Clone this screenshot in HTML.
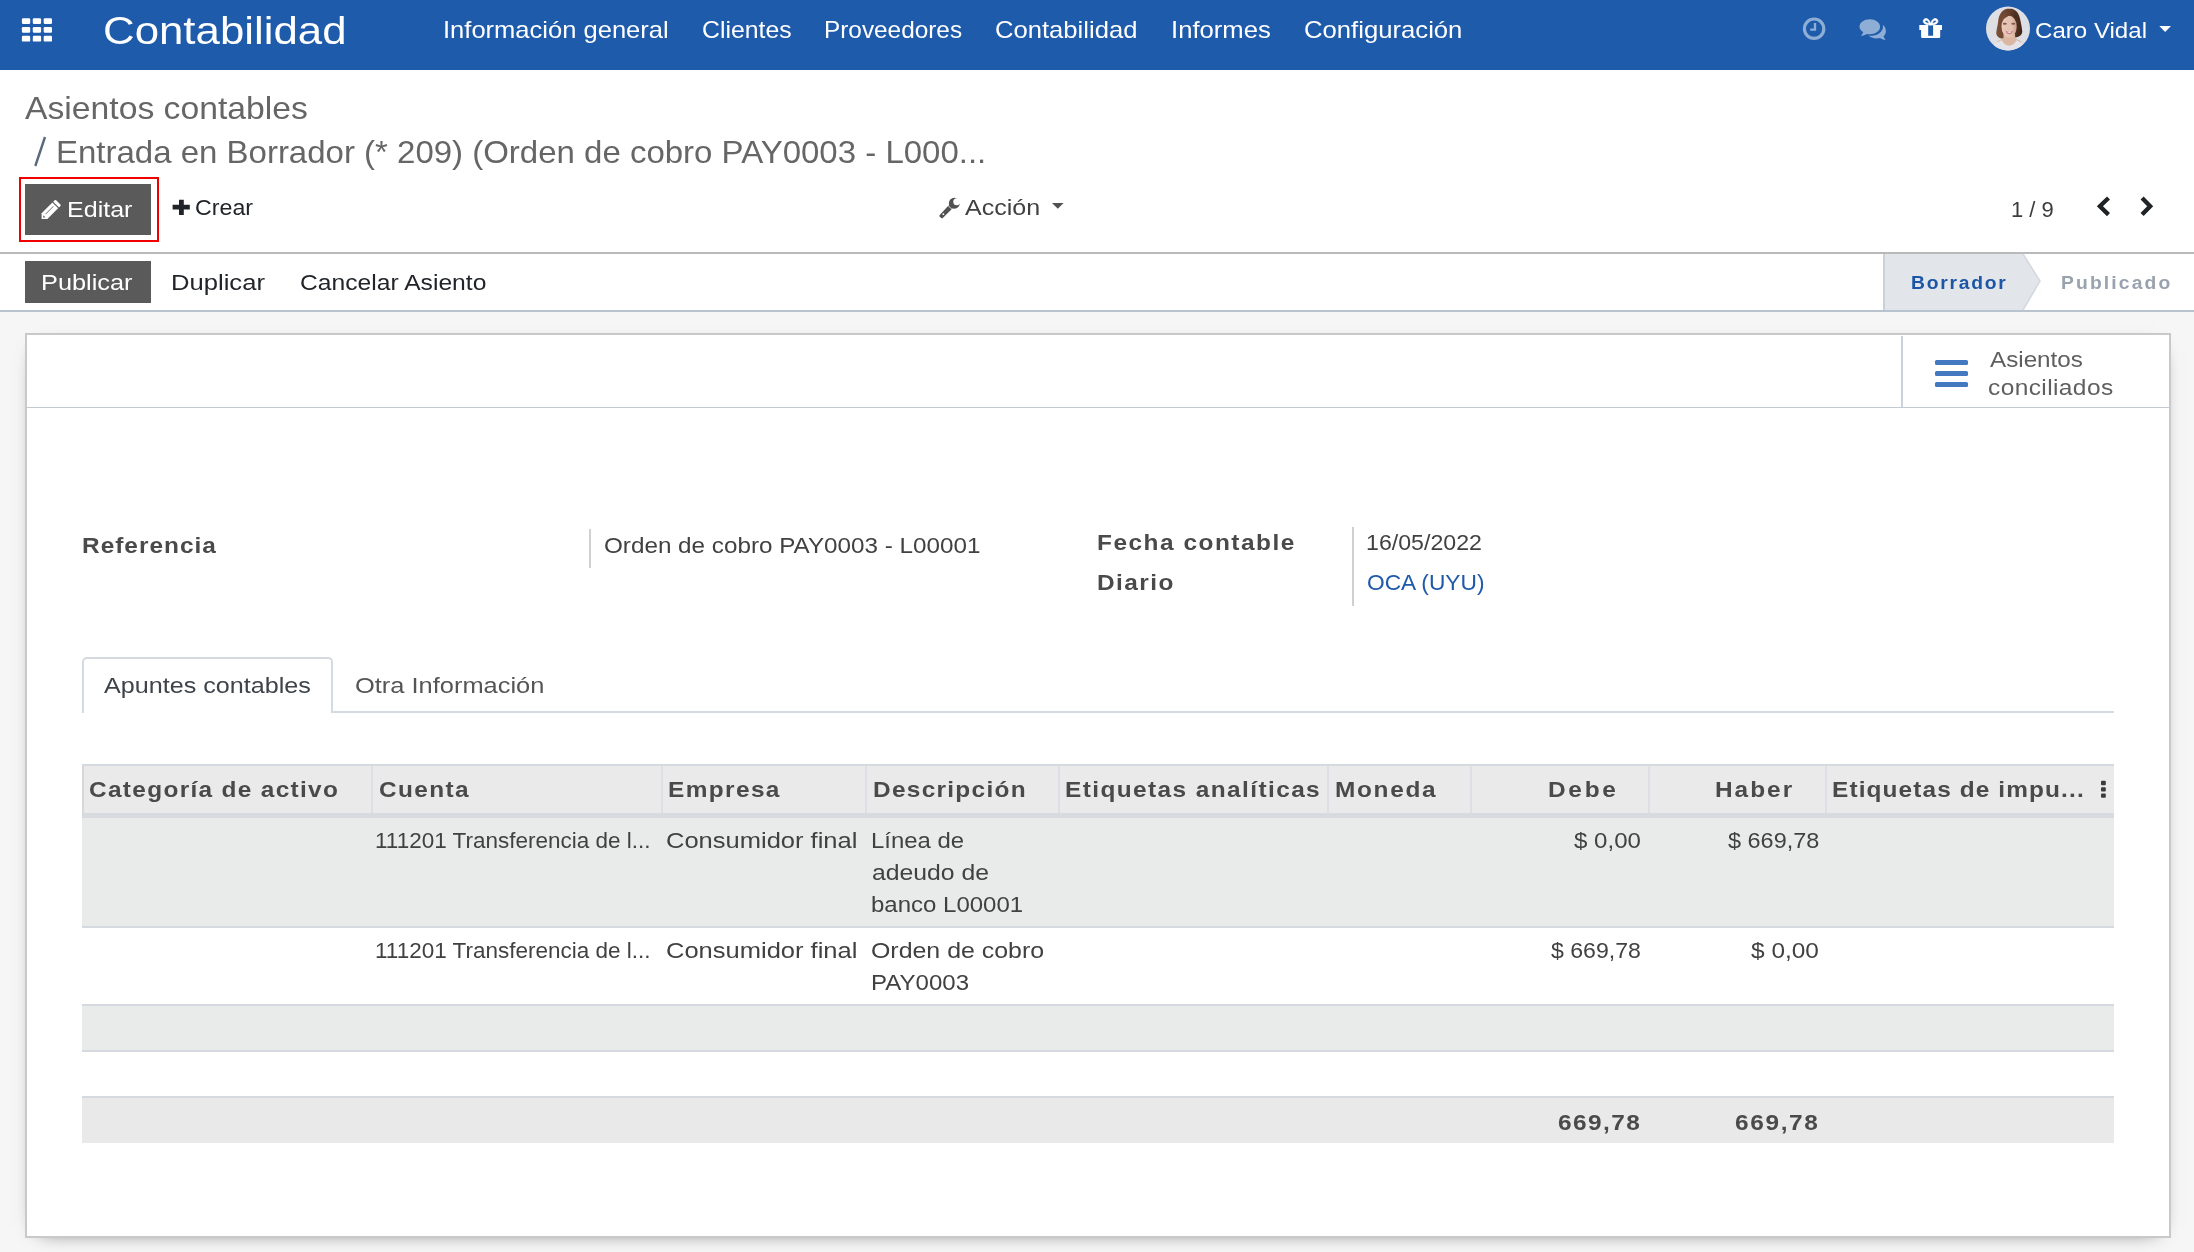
<!DOCTYPE html>
<html lang="es">
<head>
<meta charset="utf-8">
<title>Odoo - Asientos contables</title>
<style>
html,body{margin:0;padding:0}
body{width:2194px;height:1252px;overflow:hidden;position:relative;background:#f6f6f6;font-family:"Liberation Sans",sans-serif}
.a{position:absolute;box-sizing:border-box}
.t{position:absolute;white-space:nowrap;line-height:1;transform-origin:0 0;font-family:"Liberation Sans",sans-serif}
svg{position:absolute;overflow:visible}
</style>
</head>
<body>
<!-- navbar -->
<div class="a" style="left:0;top:0;width:2194px;height:70px;background:#1f5bab"></div>
<!-- control panel -->
<div class="a" style="left:0;top:70px;width:2194px;height:184px;background:#fff;border-bottom:2px solid #b9b9b9"></div>
<!-- statusbar -->
<div class="a" style="left:0;top:254px;width:2194px;height:58px;background:#fff;border-bottom:2px solid #b9c3cf"></div>
<!-- sheet -->
<div class="a" style="left:25px;top:333px;width:2146px;height:905px;background:#fff;border:2px solid #c9c9ca;box-shadow:0 5px 20px -15px #000"></div>
<!-- button box -->
<div class="a" style="left:27px;top:407px;width:2142px;height:1px;background:#c3cad3"></div>
<div class="a" style="left:1901px;top:336px;width:2px;height:71px;background:#cbd1d9"></div>
<div class="a" style="left:1935px;top:360px;width:33px;height:5px;border-radius:1.5px;background:#4479bf"></div>
<div class="a" style="left:1935px;top:371px;width:33px;height:5px;border-radius:1.5px;background:#4479bf"></div>
<div class="a" style="left:1935px;top:382px;width:33px;height:5px;border-radius:1.5px;background:#4479bf"></div>
<!-- edit button -->
<div class="a" style="left:19px;top:177px;width:140px;height:65px;border:2px solid #f20000"></div>
<div class="a" style="left:25px;top:184px;width:126px;height:51px;background:#5a5a5a"></div>
<!-- publicar button -->
<div class="a" style="left:25px;top:261px;width:126px;height:42px;background:#5a5a5a"></div>
<!-- status arrow -->
<svg style="left:1883px;top:254px" width="160" height="56" viewBox="0 0 160 56"><path d="M0 0H140L157 27L140 56H0Z" fill="#e2e5ea"/><path d="M1 0V56" stroke="#cbd1d9" stroke-width="2" fill="none"/><path d="M140 0L157 27L140 56" stroke="#d3d8de" stroke-width="1.5" fill="none"/></svg>
<!-- form separators -->
<div class="a" style="left:589px;top:529px;width:2px;height:39px;background:#d0d0d0"></div>
<div class="a" style="left:1352px;top:527px;width:2px;height:79px;background:#d0d0d0"></div>
<!-- tabs -->
<div class="a" style="left:82px;top:711px;width:2032px;height:2px;background:#d5dae0"></div>
<div class="a" style="left:82px;top:657px;width:251px;height:56px;background:#fff;border:2px solid #d5dae0;border-bottom:none;border-radius:5px 5px 0 0"></div>
<!-- table -->
<div class="a" style="left:82px;top:764px;width:2032px;height:54px;background:#eaeaea;border-top:2px solid #d5dae0;border-bottom:5px solid #d7dbe0;border-left:2px solid #d8d8da"></div>
<div class="a" style="left:371px;top:766px;width:2px;height:47px;background:#dcdfe3"></div>
<div class="a" style="left:661px;top:766px;width:2px;height:47px;background:#dcdfe3"></div>
<div class="a" style="left:865px;top:766px;width:2px;height:47px;background:#dcdfe3"></div>
<div class="a" style="left:1058px;top:766px;width:2px;height:47px;background:#dcdfe3"></div>
<div class="a" style="left:1327px;top:766px;width:2px;height:47px;background:#dcdfe3"></div>
<div class="a" style="left:1470px;top:766px;width:2px;height:47px;background:#dcdfe3"></div>
<div class="a" style="left:1648px;top:766px;width:2px;height:47px;background:#dcdfe3"></div>
<div class="a" style="left:1825px;top:766px;width:2px;height:47px;background:#dcdfe3"></div>
<div class="a" style="left:82px;top:818px;width:2032px;height:110px;background:#e9eaea;border-bottom:2px solid #d5dae0"></div>
<div class="a" style="left:82px;top:928px;width:2032px;height:78px;background:#fff;border-bottom:2px solid #d5dae0"></div>
<div class="a" style="left:82px;top:1006px;width:2032px;height:46px;background:#e9eaea;border-bottom:2px solid #d5dae0"></div>
<div class="a" style="left:82px;top:1052px;width:2032px;height:46px;background:#fff;border-bottom:2px solid #d5dae0"></div>
<div class="a" style="left:82px;top:1098px;width:2032px;height:45px;background:#e9e9e9"></div>
<svg style="left:0;top:0" width="2194" height="1252" viewBox="0 0 2194 1252">
<!-- apps grid -->
<g fill="#fff">
<rect x="21.9" y="18.2" width="8.3" height="5.8" rx="1.2"/><rect x="32.8" y="18.2" width="8.3" height="5.8" rx="1.2"/><rect x="43.7" y="18.2" width="8.3" height="5.8" rx="1.2"/>
<rect x="21.9" y="27" width="8.3" height="5.8" rx="1.2"/><rect x="32.8" y="27" width="8.3" height="5.8" rx="1.2"/><rect x="43.7" y="27" width="8.3" height="5.8" rx="1.2"/>
<rect x="21.9" y="35.8" width="8.3" height="5.8" rx="1.2"/><rect x="32.8" y="35.8" width="8.3" height="5.8" rx="1.2"/><rect x="43.7" y="35.8" width="8.3" height="5.8" rx="1.2"/>
</g>
<!-- clock -->
<g fill="none" stroke="#8faed6">
<circle cx="1814.1" cy="28.7" r="9.7" stroke-width="3.2"/>
<path d="M1815 23V29.6H1810.2" stroke-width="2.3"/>
</g>
<!-- chat -->
<g fill="#8faed6">
<path d="M1885.9 31.2c0 1.9-.9 3.6-2.4 5 .3 1.3 1 2.500 2.100 3.500-2.200 0-4-.7-5.400-1.800-1.200.3-2.400.5-3.700.5-3.300 0-6.200-1.100-8-2.900 1 .1 1.900.2 2.900.2 6.400 0 11.600-4 11.600-8.900 0-.7-.1-1.300-.3-2 2 1.500 3.200 3.800 3.200 6.400z"/>
<path d="M1869.8 19.300c5.700 0 10.300 3.400 10.300 7.500s-4.600 7.500-10.300 7.500c-1.100 0-2.200-.1-3.200-.4-1.500 1.100-3.400 1.800-5.600 1.800 1.100-1 1.900-2.300 2.200-3.600-2.300-1.400-3.700-3.300-3.700-5.300 0-4.100 4.600-7.500 10.300-7.500z"/>
</g>
<!-- gift -->
<g fill="#fff">
<path d="M1919.300 24.900h8.900v10.900h4.900v-10.900h8.900v5h-1.800v6.800q0 1.200-1.200 1.200h-16.700q-1.200 0-1.200-1.200v-6.800h-1.800z"/>
<path d="M1930.600 25.200c-1.800-.2-6.700-.6-7.300-3.400-.4-2 1.300-3.500 3.200-3.300 2 .3 3.400 3 4.100 5 .7-2 2.100-4.700 4.100-5 1.900-.2 3.600 1.300 3.200 3.300-.6 2.800-5.500 3.200-7.300 3.400zm-1.400-1.700c-.5-1.400-1.500-3.200-2.800-3.300-.9-.1-1.600.5-1.400 1.400.3 1.200 2.600 1.700 4.200 1.900zm2.800 0c1.600-.2 3.900-.7 4.200-1.900.2-.9-.5-1.500-1.400-1.400-1.300.1-2.300 1.900-2.800 3.300z" fill-rule="evenodd" stroke="#fff" stroke-width="0.700" stroke-linejoin="round"/>
</g>
<!-- avatar -->
<defs><clipPath id="av"><circle cx="2008" cy="28.500" r="22"/></clipPath>
<filter id="bl" x="-10%" y="-10%" width="120%" height="120%"><feGaussianBlur stdDeviation="0.550"/></filter>
<linearGradient id="hg" x1="0" y1="0" x2="1" y2="0"><stop offset="0" stop-color="#7d5139"/><stop offset="0.500" stop-color="#63402c"/><stop offset="1" stop-color="#3f2418"/></linearGradient>
<linearGradient id="sg" x1="0" y1="0" x2="1" y2="0"><stop offset="0" stop-color="#e9c9b9"/><stop offset="0.700" stop-color="#e2bfad"/><stop offset="1" stop-color="#c99f8b"/></linearGradient></defs>
<g clip-path="url(#av)">
<rect x="1984" y="4" width="48" height="49" fill="#dedfe4"/>
<g filter="url(#bl)">
<path d="M2009.500 8.600c-7.300 0-10.600 6-11.300 12.500-.600 5.500-1.800 8.500-2 12.500.600 3.200 2.800 4.700 5.200 5h6l8.500-1.200c3.300-.300 5.800-2 6.400-5.300-.400-5-1.200-7.500-2-12-1.100-6.500-4.300-11.500-10.800-11.500z" fill="url(#hg)"/>
<path d="M2003.600 34h11.400l.300 4.300 6.200 3.200v10h-24.500v-10l6.400-3.200z" fill="#dbb7a3"/>
<ellipse cx="2009.100" cy="26.800" rx="7.600" ry="11" fill="url(#sg)"/>
<path d="M2001.600 20c1.200-5.500 4.800-8.600 8.200-8.600 3.800 0 6.800 3.400 7.800 8.800-2.600-2.600-4.800-4.800-7.200-6-2.200 2-5.600 4.200-8.800 5.800z" fill="url(#hg)"/>
<ellipse cx="2004.800" cy="23.700" rx="2" ry="1" fill="#7b5a4f"/><ellipse cx="2013.300" cy="23.700" rx="2" ry="1" fill="#7b5a4f"/>
<path d="M2005.500 30.800c2.300.800 5.300.800 7.600 0-.700 2.500-2.200 3.500-3.800 3.500s-3.200-1-3.800-3.500z" fill="#cd7f88"/>
<path d="M2007.200 31.500h4.300c-.400 1-1.200 1.400-2.200 1.400s-1.800-.400-2.100-1.400z" fill="#f3e6e6"/>
<path d="M1992 47.500c2-4 5.800-5.600 9.800-7.200 1.500 3.600 4.200 5.400 7.400 5.400s5.700-1.800 7.200-5.400c4 1.500 7.300 3.400 9 7.200v6h-33.400z" fill="#e3e3e9"/>
</g>
</g>
<!-- user caret -->
<path d="M2159.300 26h11.700l-5.850 6z" fill="#fff"/>
<!-- pencil -->
<g fill="#fff">
<path d="M41.600 213.300L52.350 202.550L58.150 208.350L47.400 219.100H41.600Z"/>
<path d="M53.200 201.700L54.600 200.300Q55.400 199.500 56.200 200.300L60.400 204.500Q61.200 205.300 60.400 206.100L59 207.500Z"/>
</g>
<path d="M45.600 214.100L53.300 206.400" stroke="#5a5a5a" stroke-width="0.900" fill="none"/>
<path d="M43.200 215.200v2.300h2.300z" fill="#5a5a5a"/>
<!-- breadcrumb slash -->
<path d="M35.300 166L45 137" stroke="#596a7d" stroke-width="2.400" fill="none"/>
<!-- plus -->
<path d="M179 199.800h4.800v4.900h6v4.800h-6v5.500h-4.800v-5.500h-6.400v-4.800h6.400z" fill="#212529"/>
<!-- wrench -->
<g>
<path d="M939.700 215L951.300 202.600L954.900 206.100L942.800 218Q942 218.700 941.200 218L939.600 216.400Q939.100 215.700 939.700 215Z" fill="#515151"/>
<circle cx="954.400" cy="203.200" r="5.500" fill="#515151"/>
<circle cx="956.800" cy="201.800" r="3.500" fill="#fff"/>
<path d="M947.800 205.300L952.400 209.700" stroke="#fff" stroke-width="0.800" fill="none"/>
<circle cx="943.400" cy="214.200" r="0.900" fill="#fff"/>
</g>
<!-- action caret -->
<path d="M1052 203h11.600l-5.800 5.800z" fill="#515151"/>
<!-- pager chevrons -->
<g fill="none" stroke="#1f2326" stroke-width="4.300">
<path d="M2108.500 198L2099.900 206.300L2108.500 214.600"/>
<path d="M2142.100 198L2150.200 206.300L2142.100 214.600"/>
</g>
<!-- kebab -->
<g fill="#3c3c3c">
<rect x="2101" y="780.800" width="4.800" height="4.400" rx="1"/><rect x="2101" y="787.200" width="4.800" height="4.400" rx="1"/><rect x="2101" y="793.400" width="4.800" height="4.400" rx="1"/>
</g>
</svg>

<div class="a" style="left:0;top:0;width:2194px;height:1252px;will-change:transform">
<nav>
<span class="t" style="left:103.38px;top:11px;font-size:39px;font-weight:400;color:#ffffff;letter-spacing:0.000px;transform:scaleX(1.1234)">Contabilidad</span>
<span class="t" style="left:443.32px;top:19px;font-size:23.4px;font-weight:400;color:#ffffff;letter-spacing:0.000px;transform:scaleX(1.0917)">Información general</span>
<span class="t" style="left:702.14px;top:19px;font-size:23.4px;font-weight:400;color:#ffffff;letter-spacing:0.000px;transform:scaleX(1.0603)">Clientes</span>
<span class="t" style="left:824.16px;top:19px;font-size:23.4px;font-weight:400;color:#ffffff;letter-spacing:0.000px;transform:scaleX(1.0410)">Proveedores</span>
<span class="t" style="left:995.30px;top:19px;font-size:23.4px;font-weight:400;color:#ffffff;letter-spacing:0.000px;transform:scaleX(1.0950)">Contabilidad</span>
<span class="t" style="left:1170.81px;top:19px;font-size:23.4px;font-weight:400;color:#ffffff;letter-spacing:0.000px;transform:scaleX(1.0974)">Informes</span>
<span class="t" style="left:1303.60px;top:19px;font-size:23.4px;font-weight:400;color:#ffffff;letter-spacing:0.000px;transform:scaleX(1.0975)">Configuración</span>
<span class="t" style="left:2035.24px;top:19px;font-size:22.8px;font-weight:400;color:#ffffff;letter-spacing:0.000px;transform:scaleX(1.0562)">Caro Vidal</span>
</nav>
<header>
<span class="t" style="left:25.00px;top:92px;font-size:32px;font-weight:400;color:#666666;letter-spacing:0.000px;transform:scaleX(1.0530)">Asientos contables</span>
<span class="t" style="left:56.44px;top:136px;font-size:32px;font-weight:400;color:#666666;letter-spacing:0.000px;transform:scaleX(1.0308)">Entrada en Borrador (* 209) (Orden de cobro PAY0003 - L000...</span>
<span class="t" style="left:67.10px;top:198px;font-size:22.8px;font-weight:400;color:#ffffff;letter-spacing:0.000px;transform:scaleX(1.0987)">Editar</span>
<span class="t" style="left:195.28px;top:196px;font-size:22.8px;font-weight:400;color:#212529;letter-spacing:0.000px;transform:scaleX(1.0175)">Crear</span>
<span class="t" style="left:965.40px;top:196px;font-size:22.8px;font-weight:400;color:#414141;letter-spacing:0.000px;transform:scaleX(1.0982)">Acción</span>
<span class="t" style="left:2011.23px;top:198px;font-size:22.8px;font-weight:400;color:#3c3c3c;letter-spacing:0.000px;transform:scaleX(0.9653)">1 / 9</span>
</header>
<section>
<span class="t" style="left:41.27px;top:271px;font-size:22.8px;font-weight:400;color:#ffffff;letter-spacing:0.000px;transform:scaleX(1.1107)">Publicar</span>
<span class="t" style="left:171.08px;top:271px;font-size:22.8px;font-weight:400;color:#212529;letter-spacing:0.000px;transform:scaleX(1.1230)">Duplicar</span>
<span class="t" style="left:300.42px;top:271px;font-size:22.8px;font-weight:400;color:#212529;letter-spacing:0.000px;transform:scaleX(1.0814)">Cancelar Asiento</span>
<span class="t" style="left:1910.73px;top:274px;font-size:18px;font-weight:700;color:#1c56a6;letter-spacing:1.639px;transform:scaleX(1.0700)">Borrador</span>
<span class="t" style="left:2061.43px;top:274px;font-size:18px;font-weight:700;color:#99a2af;letter-spacing:2.013px;transform:scaleX(1.0700)">Publicado</span>
</section>
<main>
<span class="t" style="left:1989.50px;top:350px;font-size:21.5px;font-weight:400;color:#5f5f5f;letter-spacing:0.000px;transform:scaleX(1.1266)">Asientos</span>
<span class="t" style="left:1988.30px;top:378px;font-size:21.5px;font-weight:400;color:#5f5f5f;letter-spacing:0.342px;transform:scaleX(1.1400)">conciliados</span>
<span class="t" style="left:82.43px;top:534px;font-size:22.8px;font-weight:700;color:#4a4a4a;letter-spacing:0.944px;transform:scaleX(1.0700)">Referencia</span>
<span class="t" style="left:603.54px;top:534px;font-size:22.8px;font-weight:400;color:#414141;letter-spacing:0.000px;transform:scaleX(1.0635)">Orden de cobro PAY0003 - L00001</span>
<span class="t" style="left:1097.13px;top:531px;font-size:22.8px;font-weight:700;color:#4a4a4a;letter-spacing:1.425px;transform:scaleX(1.0700)">Fecha contable</span>
<span class="t" style="left:1097.13px;top:571px;font-size:22.8px;font-weight:700;color:#4a4a4a;letter-spacing:1.357px;transform:scaleX(1.0700)">Diario</span>
<span class="t" style="left:1366.00px;top:531px;font-size:22.8px;font-weight:400;color:#414141;letter-spacing:0.000px;transform:scaleX(1.0157)">16/05/2022</span>
<span class="t" style="left:1367.30px;top:571px;font-size:22.8px;font-weight:400;color:#1f5aaa;letter-spacing:0.000px;transform:scaleX(0.9971)">OCA (UYU)</span>
<span class="t" style="left:103.80px;top:674px;font-size:22.8px;font-weight:400;color:#3d4349;letter-spacing:0.000px;transform:scaleX(1.1027)">Apuntes contables</span>
<span class="t" style="left:354.68px;top:674px;font-size:22.8px;font-weight:400;color:#555555;letter-spacing:0.000px;transform:scaleX(1.1154)">Otra Información</span>
<span class="t" style="left:89.48px;top:778px;font-size:22.8px;font-weight:700;color:#4a4a4a;letter-spacing:1.239px;transform:scaleX(1.0700)">Categoría de activo</span>
<span class="t" style="left:379.40px;top:778px;font-size:22.8px;font-weight:700;color:#4a4a4a;letter-spacing:1.287px;transform:scaleX(1.0700)">Cuenta</span>
<span class="t" style="left:667.95px;top:778px;font-size:22.8px;font-weight:700;color:#4a4a4a;letter-spacing:1.302px;transform:scaleX(1.0700)">Empresa</span>
<span class="t" style="left:873.13px;top:778px;font-size:22.8px;font-weight:700;color:#4a4a4a;letter-spacing:1.209px;transform:scaleX(1.0700)">Descripción</span>
<span class="t" style="left:1065.13px;top:778px;font-size:22.8px;font-weight:700;color:#4a4a4a;letter-spacing:1.325px;transform:scaleX(1.0700)">Etiquetas analíticas</span>
<span class="t" style="left:1335.33px;top:778px;font-size:22.8px;font-weight:700;color:#4a4a4a;letter-spacing:1.584px;transform:scaleX(1.0700)">Moneda</span>
<span class="t" style="left:1548.23px;top:778px;font-size:22.8px;font-weight:700;color:#4a4a4a;letter-spacing:2.570px;transform:scaleX(1.0700)">Debe</span>
<span class="t" style="left:1714.59px;top:778px;font-size:22.8px;font-weight:700;color:#4a4a4a;letter-spacing:1.877px;transform:scaleX(1.0700)">Haber</span>
<span class="t" style="left:1832.43px;top:778px;font-size:22.8px;font-weight:700;color:#4a4a4a;letter-spacing:1.047px;transform:scaleX(1.0700)">Etiquetas de impu...</span>
<span class="t" style="left:374.85px;top:829px;font-size:22.8px;font-weight:400;color:#414141;letter-spacing:0.000px;transform:scaleX(0.9863)">111201 Transferencia de l...</span>
<span class="t" style="left:666.18px;top:829px;font-size:22.8px;font-weight:400;color:#414141;letter-spacing:0.000px;transform:scaleX(1.1190)">Consumidor final</span>
<span class="t" style="left:871.35px;top:829px;font-size:22.8px;font-weight:400;color:#414141;letter-spacing:0.000px;transform:scaleX(1.0487)">Línea de</span>
<span class="t" style="left:872.40px;top:861px;font-size:22.8px;font-weight:400;color:#414141;letter-spacing:0.000px;transform:scaleX(1.0861)">adeudo de</span>
<span class="t" style="left:871.35px;top:893px;font-size:22.8px;font-weight:400;color:#414141;letter-spacing:0.000px;transform:scaleX(1.0529)">banco L00001</span>
<span class="t" style="left:1574.30px;top:829px;font-size:22.8px;font-weight:400;color:#414141;letter-spacing:0.000px;transform:scaleX(1.0558)">$ 0,00</span>
<span class="t" style="left:1728.20px;top:829px;font-size:22.8px;font-weight:400;color:#414141;letter-spacing:0.000px;transform:scaleX(1.0288)">$ 669,78</span>
<span class="t" style="left:374.85px;top:939px;font-size:22.8px;font-weight:400;color:#414141;letter-spacing:0.000px;transform:scaleX(0.9863)">111201 Transferencia de l...</span>
<span class="t" style="left:666.18px;top:939px;font-size:22.8px;font-weight:400;color:#414141;letter-spacing:0.000px;transform:scaleX(1.1190)">Consumidor final</span>
<span class="t" style="left:871.31px;top:939px;font-size:22.8px;font-weight:400;color:#414141;letter-spacing:0.000px;transform:scaleX(1.0924)">Orden de cobro</span>
<span class="t" style="left:871.34px;top:971px;font-size:22.8px;font-weight:400;color:#414141;letter-spacing:0.000px;transform:scaleX(1.0551)">PAY0003</span>
<span class="t" style="left:1551.30px;top:939px;font-size:22.8px;font-weight:400;color:#414141;letter-spacing:0.000px;transform:scaleX(1.0129)">$ 669,78</span>
<span class="t" style="left:1750.80px;top:939px;font-size:22.8px;font-weight:400;color:#414141;letter-spacing:0.000px;transform:scaleX(1.0717)">$ 0,00</span>
<span class="t" style="left:1558.30px;top:1111px;font-size:22.8px;font-weight:700;color:#4a4a4a;letter-spacing:1.368px;transform:scaleX(1.0700)">669,78</span>
<span class="t" style="left:1734.84px;top:1111px;font-size:22.8px;font-weight:700;color:#4a4a4a;letter-spacing:1.547px;transform:scaleX(1.0700)">669,78</span>
</main>
</div>
</body>
</html>
